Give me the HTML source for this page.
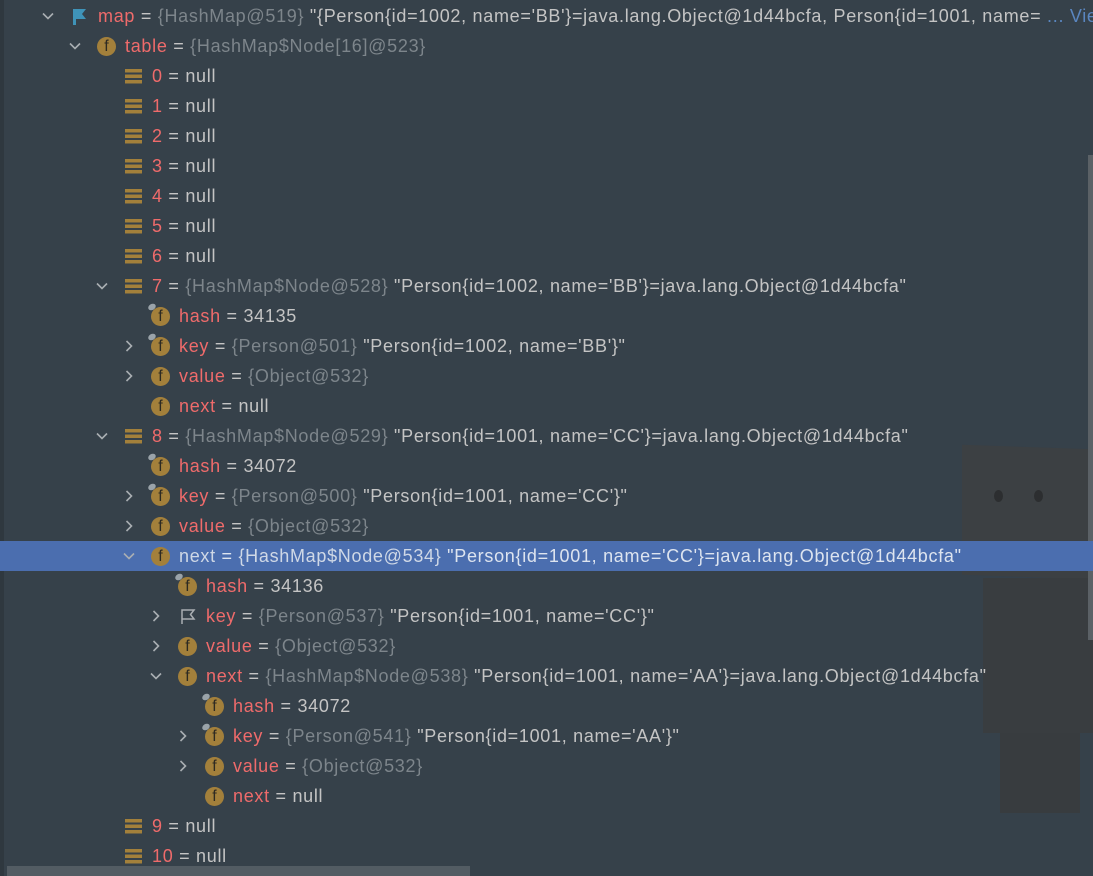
<!DOCTYPE html>
<html><head><meta charset="utf-8"><style>
html,body{margin:0;padding:0}
body{width:1093px;height:876px;background:#36414a;position:relative;overflow:hidden;font-family:"Liberation Sans","Noto Sans CJK SC",sans-serif;font-size:18px;letter-spacing:0.7px;color:#c4c4c4}
.r{position:absolute;left:0;right:0;height:30px;line-height:30px;white-space:nowrap}
.sel{background:#4b6eaf}
.ch{position:absolute;top:9px;width:12px;height:12px}
.ic{position:absolute;top:6px;width:19px;height:19px;letter-spacing:0}
.f{border-radius:50%;background:#a3803b;color:#2d2a22;font-size:16px;line-height:19px;text-align:center;font-family:"Liberation Sans",sans-serif}
.fl{position:absolute;left:-3px;top:-3px;width:8px;height:6px;border-radius:50%;background:#9aa3a9;transform:rotate(-30deg)}
.arr{position:absolute;top:8px;width:17px;height:15px;background:repeating-linear-gradient(#a3803b 0 3.5px,transparent 3.5px 5.5px)}
.t{position:absolute;top:0}
.n{color:#ef6b6b}
.g{color:#7d858b}
.sel .n,.sel .g{color:#cfd8e6}
.sel .t{color:#dde4ef}
.robot{position:absolute}
</style></head><body>
<div style="position:absolute;left:0;top:0;width:4px;height:876px;background:#2f383f"></div>
<div class="robot" style="left:962px;top:447px;width:131px;height:130px;transform:skewY(2deg);background:#3c4043"></div>
<div class="robot" style="left:983px;top:578px;width:110px;height:155px;background:#393d40"></div>
<div class="robot" style="left:1000px;top:733px;width:80px;height:80px;background:#383c3f"></div>
<div style="position:absolute;left:994px;top:490px;width:9px;height:12px;border-radius:50%;background:#2c2e30"></div>
<div style="position:absolute;left:1034px;top:490px;width:9px;height:12px;border-radius:50%;background:#2c2e30"></div>
<div style="position:absolute;left:1088px;top:155px;width:5px;height:485px;background:#5b6166"></div>
<div style="position:absolute;left:7px;top:866px;width:463px;height:10px;background:#535c63"></div>
<div id="rows"></div>
<script>
var S='<svg class="ch" viewBox="0 0 12 12" style="left:XPX"><path d="D" fill="none" stroke="#a9aeb2" stroke-width="1.6"/></svg>';
function ch(l,o){if(!o)return '';return S.replace('X',42+27*l).replace('D',o=='v'?'M1 3.5 L6 8.5 L11 3.5':'M3.5 1 L8.5 6 L3.5 11');}
var rows=[
[0,'v','flag','map',' = <span class="g">{HashMap@519}</span> "{Person{id=1002, name=\'BB\'}=java.lang.Object@1d44bcfa, Person{id=1001, name= <span style="color:#5a86c0">... View</span>'],
[1,'v','f','table',' = <span class="g">{HashMap$Node[16]@523}</span>'],
[2,'','a','0',' = null'],[2,'','a','1',' = null'],[2,'','a','2',' = null'],[2,'','a','3',' = null'],[2,'','a','4',' = null'],[2,'','a','5',' = null'],[2,'','a','6',' = null'],
[2,'v','a','7',' = <span class="g">{HashMap$Node@528}</span> "Person{id=1002, name=\'BB\'}=java.lang.Object@1d44bcfa"'],
[3,'','fh','hash',' = 34135'],
[3,'>','fh','key',' = <span class="g">{Person@501}</span> "Person{id=1002, name=\'BB\'}"'],
[3,'>','f','value',' = <span class="g">{Object@532}</span>'],
[3,'','f','next',' = null'],
[2,'v','a','8',' = <span class="g">{HashMap$Node@529}</span> "Person{id=1001, name=\'CC\'}=java.lang.Object@1d44bcfa"'],
[3,'','fh','hash',' = 34072'],
[3,'>','fh','key',' = <span class="g">{Person@500}</span> "Person{id=1001, name=\'CC\'}"'],
[3,'>','f','value',' = <span class="g">{Object@532}</span>'],
[3,'v','f','next',' = <span class="g">{HashMap$Node@534}</span> "Person{id=1001, name=\'CC\'}=java.lang.Object@1d44bcfa"',1],
[4,'','fh','hash',' = 34136'],
[4,'>','flag2','key',' = <span class="g">{Person@537}</span> "Person{id=1001, name=\'CC\'}"'],
[4,'>','f','value',' = <span class="g">{Object@532}</span>'],
[4,'v','f','next',' = <span class="g">{HashMap$Node@538}</span> "Person{id=1001, name=\'AA\'}=java.lang.Object@1d44bcfa"'],
[5,'','fh','hash',' = 34072'],
[5,'>','fh','key',' = <span class="g">{Person@541}</span> "Person{id=1001, name=\'AA\'}"'],
[5,'>','f','value',' = <span class="g">{Object@532}</span>'],
[5,'','f','next',' = null'],
[2,'','a','9',' = null'],[2,'','a','10',' = null']];
var h='';
rows.forEach(function(r,i){
 var l=r[0],ix=70+27*l,tx=98+27*l,top=1+30*i,ic='';
 if(r[2]=='f')ic='<div class="ic f" style="left:'+ix+'px">f</div>';
 else if(r[2]=='fh')ic='<div class="ic f" style="left:'+ix+'px"><div class="fl"></div>f</div>';
 else if(r[2]=='a')ic='<div class="arr" style="left:'+(ix+1)+'px"></div>';
 else if(r[2]=='flag')ic='<svg class="ic" style="left:'+ix+'px" viewBox="0 0 19 19"><path d="M3 2 H16 L12 7 L16 12 H6 V18 H3 Z" fill="#3f93b8"/></svg>';
 else ic='<svg class="ic" style="left:'+ix+'px" viewBox="0 0 19 19"><path d="M4 17 V3 H16 L12.5 7.5 L16 12 H4" fill="none" stroke="#a9aeb2" stroke-width="1.5"/></svg>';
 h+='<div class="r'+(r[5]?' sel':'')+'" style="top:'+top+'px">'+ch(l,r[1])+ic+'<span class="t" style="left:'+tx+'px"><span class="n">'+r[3]+'</span>'+r[4]+'</span></div>';
});
document.getElementById('rows').innerHTML=h;
</script>
</body></html>
